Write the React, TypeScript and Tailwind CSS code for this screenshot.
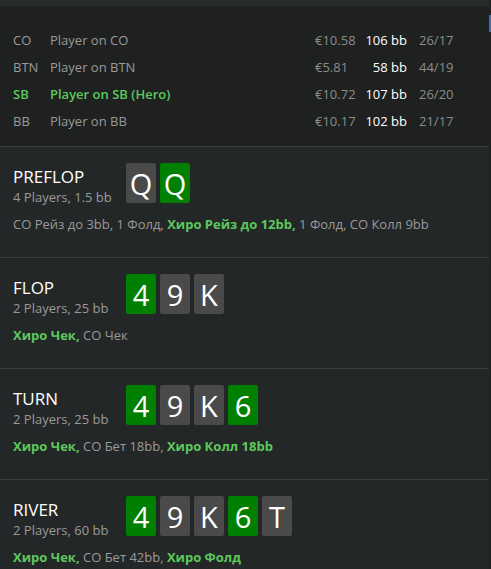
import React from "react";

type Seg = { t: string; hero?: boolean };
type Street = { name: string; info: string; cards: { r: string; g?: boolean }[]; actions: Seg[] };

const players = [
  { pos: "CO", name: "Player on CO", money: "€10.58", bb: "106 bb", ratio: "26/17" },
  { pos: "BTN", name: "Player on BTN", money: "€5.81", bb: "58 bb", ratio: "44/19" },
  { pos: "SB", name: "Player on SB (Hero)", money: "€10.72", bb: "107 bb", ratio: "26/20", hero: true },
  { pos: "BB", name: "Player on BB", money: "€10.17", bb: "102 bb", ratio: "21/17" },
];

const streets: Street[] = [
  {
    name: "PREFLOP",
    info: "4 Players, 1.5 bb",
    cards: [{ r: "Q" }, { r: "Q", g: true }],
    actions: [
      { t: "CO Рейз до 3bb, 1 Фолд, " },
      { t: "Хиро Рейз до 12bb,", hero: true },
      { t: " 1 Фолд, CO Колл 9bb" },
    ],
  },
  {
    name: "FLOP",
    info: "2 Players, 25 bb",
    cards: [{ r: "4", g: true }, { r: "9" }, { r: "K" }],
    actions: [{ t: "Хиро Чек,", hero: true }, { t: " CO Чек" }],
  },
  {
    name: "TURN",
    info: "2 Players, 25 bb",
    cards: [{ r: "4", g: true }, { r: "9" }, { r: "K" }, { r: "6", g: true }],
    actions: [
      { t: "Хиро Чек,", hero: true },
      { t: " CO Бет 18bb, " },
      { t: "Хиро Колл 18bb", hero: true },
    ],
  },
  {
    name: "RIVER",
    info: "2 Players, 60 bb",
    cards: [{ r: "4", g: true }, { r: "9" }, { r: "K" }, { r: "6", g: true }, { r: "T" }],
    actions: [
      { t: "Хиро Чек,", hero: true },
      { t: " CO Бет 42bb, " },
      { t: "Хиро Фолд", hero: true },
    ],
  },
];

export default function App() {
  return (
    <div
      className="w-[491px] h-[569px] overflow-hidden bg-[#242727] flex"
      style={{ fontFamily: '"Open Sans", "Noto Sans", Arial, sans-serif' }}
    >
      <div className="flex-1 flex flex-col">
        <div className="h-[6px] shrink-0 bg-[#292c2c]" />
        <div className="shrink-0 bg-[#1e2120] pt-[21px] pb-[11px] border-b border-[#3a3d3d]">
          {players.map((p) => (
            <div
              key={p.pos}
              className={`h-[27px] flex items-center text-[13px] ${p.hero ? "text-[#5dc85d] font-semibold" : "text-[#9a9a9a]"}`}
            >
              <div className="w-[37px] pl-[13px] box-content">{p.pos}</div>
              <div className="w-[265px]">{p.name}</div>
              <div className="w-[50px] text-[#8c8c8c] font-normal">{p.money}</div>
              <div className="w-[42px] text-right text-white font-normal">{p.bb}</div>
              <div className="pl-[12px] text-[#8c8c8c] font-normal">{p.ratio}</div>
            </div>
          ))}
        </div>
        {streets.map((s) => (
          <div key={s.name} className="h-[111px] border-b border-[#3a3d3d] pl-[13px] pt-[16px] shrink-0">
            <div className="flex">
              <div className="w-[113px] pt-[3px]">
                <div className="text-[17px] leading-[22px] text-white">{s.name}</div>
                <div className="text-[13px] leading-[18px] text-[#9a9a9a]">{s.info}</div>
              </div>
              <div className="flex gap-[4px]">
                {s.cards.map((c, i) => (
                  <div
                    key={i}
                    className={`w-[30px] h-[40px] rounded-[2px] flex items-center justify-center text-white text-[29px] leading-none ${c.g ? "bg-[#008000]" : "bg-[#4a4a4a]"}`}
                  >
                    {c.r}
                  </div>
                ))}
              </div>
            </div>
            <div className="mt-[9px] text-[13px] text-[#9a9a9a]">
              {s.actions.map((a, i) => (
                <span key={i} className={a.hero ? "text-[#5dc85d] font-bold" : ""}>
                  {a.t}
                </span>
              ))}
            </div>
          </div>
        ))}
      </div>
      <div className="w-[2px] bg-[#1e2120] relative">
        <div className="absolute left-0 top-[15px] w-[2px] h-[17px] bg-[#3d6fb0]" />
      </div>
    </div>
  );
}
